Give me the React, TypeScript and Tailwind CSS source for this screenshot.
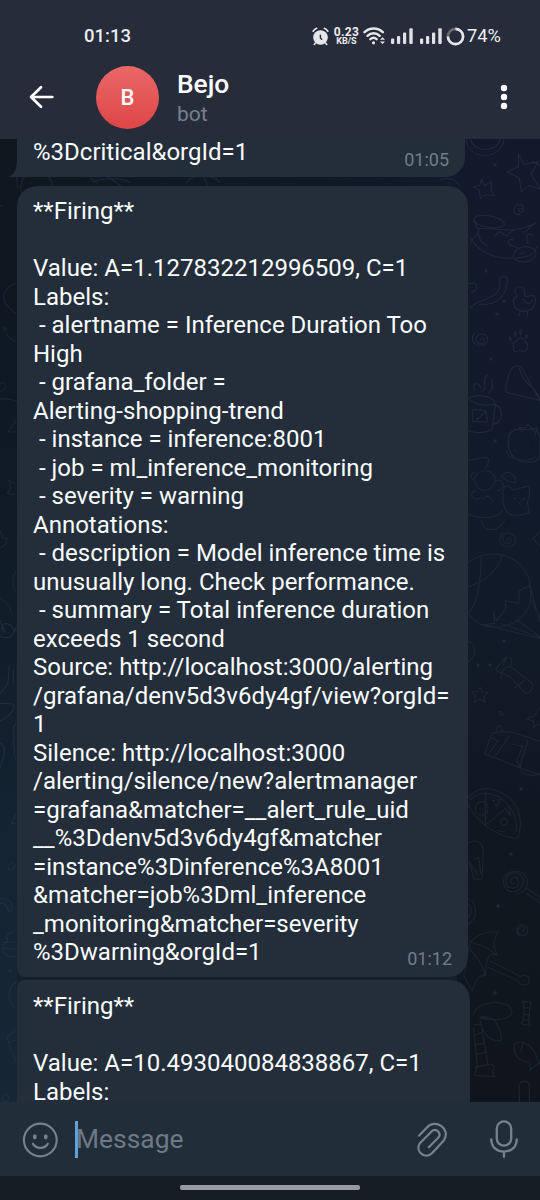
import type { ReactNode } from "react";

const firing: string[] = [
  "**Firing**",
  "",
  "Value: A=1.127832212996509, C=1",
  "Labels:",
  " - alertname = Inference Duration Too",
  "High",
  " - grafana_folder =",
  "Alerting-shopping-trend",
  " - instance = inference:8001",
  " - job = ml_inference_monitoring",
  " - severity = warning",
  "Annotations:",
  " - description = Model inference time is",
  "unusually long. Check performance.",
  " - summary = Total inference duration",
  "exceeds 1 second",
  "Source: http://localhost:3000/alerting",
  "/grafana/denv5d3v6dy4gf/view?orgId=",
  "1",
  "Silence: http://localhost:3000",
  "/alerting/silence/new?alertmanager",
  "=grafana&matcher=__alert_rule_uid",
  "__%3Ddenv5d3v6dy4gf&matcher",
  "=instance%3Dinference%3A8001",
  "&matcher=job%3Dml_inference",
  "_monitoring&matcher=severity",
  "%3Dwarning&orgId=1",
];

const next: string[] = ["**Firing**", "", "Value: A=10.493040084838867, C=1", "Labels:"];

function Lines({ lines }: { lines: string[] }) {
  return (
    <div className="text-[24px] leading-[28.5px] text-[#fafcfd]">
      {lines.map((line, i) => (
        <div key={i} className="h-[28.5px] whitespace-pre">
          {line}
        </div>
      ))}
    </div>
  );
}

function Bubble({ className, children }: { className: string; children: ReactNode }) {
  return <div className={`relative shrink-0 bg-[#232e3a] ${className}`}>{children}</div>;
}

function Wallpaper() {
  return (
    <svg
      className="absolute inset-0 h-full w-full"
      viewBox="0 139 540 963"
      fill="none"
      strokeLinecap="round"
      strokeLinejoin="round"
    >
      <defs>
        <linearGradient id="right" x1="0" y1="0" x2="0" y2="1">
          <stop offset="0" stopColor="#11192b" />
          <stop offset="0.45" stopColor="#111a29" />
          <stop offset="0.75" stopColor="#0f1820" />
          <stop offset="1" stopColor="#10151d" />
        </linearGradient>
        <linearGradient id="left" x1="0" y1="0" x2="0" y2="1">
          <stop offset="0" stopColor="#0f171f" />
          <stop offset="0.4" stopColor="#0f1a25" />
          <stop offset="0.7" stopColor="#142331" />
          <stop offset="1" stopColor="#162635" />
        </linearGradient>
        <linearGradient id="across" x1="0" y1="0" x2="1" y2="0">
          <stop offset="0" stopColor="#0f171f" />
          <stop offset="1" stopColor="#11192b" />
        </linearGradient>
      </defs>
      <rect y="139" width="540" height="963" fill="url(#across)" />
      <rect y="139" width="30" height="963" fill="url(#left)" />
      <rect x="440" y="139" width="100" height="963" fill="url(#right)" />
      <rect x="17" y="972" width="440" height="14" fill="#15202c" />

      <g stroke="#20283b" strokeWidth="3.5" transform="translate(440 130) scale(.33333)">
        <path d="M78 30c8 62 104 62 114 0M92 30c10 36 76 40 88 0M0 150c25-12 50 0 60 18" />
        <path d="m236 72 16 31 43-8-22 37 27 45-33-10-22 18-8-42-36-17 34-16ZM124 147l8 20 23-12-2 23 10 20-27-4-15 12-3-26-18-9 20-6ZM300 106l-24-12" />
        <path d="M246 238c-10-12-14 8-4 8 15 0 11-24-6-22-22 4-20 35 4 29" />
        <path d="M102 268c-2-20 84-14 92 16-20 18-86 8-92-16ZM102 272l10 24c62-4 106 20 175-18l-34 30M90 322c30 52 86 66 140 62 38-4 54-8 60-34M92 338l26-38M114 302c0 30 16 36 28 48M164 318l14-14 22 14 20-18M220 384c0-46 72-42 68-8-12 24-50 26-68 8ZM232 352c-34-2-34-32-12-22M264 342c-12-38 10-32 16-24M242 372l12-6" />
        <path d="M86 462c28-12 32 18 8 26M92 534c14-30 104-22 86-88 12-14 30-4 24 10-6 48-36 70-84 68" />
        <path d="M224 486c0-20 28-22 31 1-5 11 2 16 14 10 28-12 22 46-14 48-42-2-40-42-24-46ZM240 548l-5 10M263 547v11M250 508c12 20 24 12 28 0" />
        <path d="M120 632c8-16 20 2 8 8-16 6-28-14-14-24 22-14 42 12 20 28-28 12-46-16-30-34" />
        <path d="M218 640c16-4 15-22 30-16 0 12 19 12 14 24 2 16-14 20-22 12-12 8-22 6-18-7ZM207 622c5-5 10 8 4 9ZM224 606c7-2 7 13 0 12ZM240 600c8-4 6 16 0 14ZM257 614c8-3 5 12 0 12Z" />
        <path d="M198 770c10-50 20-72 46-58l56 100c-44-14-72-14-102-26ZM238 714c8 46 48 54 60 90" />
        <path d="M82 806c30-18 84-6 84 16l-10 76c-22 14-60 12-76 0ZM164 826c32 2 24 62-8 56M90 808c22 20 58 20 76 14M98 838l40 4 4 34-44-2ZM110 870l26-24M104 780c-10-18 8-28 18-8M126 784c22-10-6-34 16-48M146 788c24-20 4-28 10-40" />
        <path d="M206 920c4-22 30-26 52-20 26-8 42 8 42 24v60c-8 8-24 14-40 12-44 0-60-36-54-76ZM246 906l-8-14 18 2 8-12 10 14 20-2-10 20M224 936h1M246 930h1M264 940h1M226 962h1M248 970h1" />
      </g>

      <g stroke="#1d2634" strokeWidth="3.5" transform="translate(440 450) scale(.33333)">
        <path d="M200 0c-4 30 64 38 88 20M86 30c28 0 26-8 50-8 16 2 10 20 0 30M104 90c2-36 60-38 62 0-4 38-60 44-62 0ZM100 90c-18-20 4-30 12-14M164 96c26-20 36 22 10 26M106 122c-30 12 0 34 20 20M130 150c10-20 24-10 28 8M192 112l12-6 16 14 30-8 18-4v30l-6 20 6 30-22 6-28 2c-30-10-34-50-26-84ZM184 80c18-28 48-4 42 18-22 0-32-10-42-18ZM220 144l6 2M244 150l10-4M236 158l6 5M124 210c4 38 50 40 70 0M80 190c36 18 88 20 108-8" />
        <path d="M200 272c8-16 20 2 8 8-16 6-28-18-14-28 22-14 46 16 24 34-28 18-52-16-30-38M278 266l22-20M278 266l22 20" />
        <path d="M80 340c80-60 200-20 192 100-4 100-150 120-186 50M124 320c-2 72-12 140-36 166M188 314c-20 56-54 80-104 96M160 488l10 24 28-36-2-24 40 8 2-38 20-10 12-4 30 110M160 488l4 32-30 4 166 42M188 522l112 40M228 508l72 52M270 440l30 66" />
        <path d="m168 656 32-36 16 8-4 22 62 48c12 12-4 36-18 32l-44-48-42-20ZM200 620l-10 26M212 650c-22 0-30 20-28 34M252 692l-26 20M120 712l7 14 16 2-11 12 4 16-16-9-17 9 3-19-10-11 17-3ZM260 806l22-8 18-26M260 806l20 8v18l20-12" />
        <path d="m134 910 22-60c48-16 102 10 144 24M136 912c58 22 104 44 164 62M152 862l22 10-28 40M208 858l-42 60M216 882l32 6-18 44 12 20M264 870l-24 78M170 842c-4-18 20-20 16 0M178 786c8-8 18 12 4 10ZM80 572c34 8 30 56 0 64" />
      </g>

      <g stroke="#1b242f" strokeWidth="3.5" transform="translate(440 770) scale(.33333)">
        <path d="M240 0c10 18 42 20 60 10M84 84c44-64 180-10 154 104-4 28-24 14-46 10-44-16-90-54-108-96M90 90c42-50 150 0 138 94M136 66v100l62-52M106 116c0-30 38-26 38 0-2 26-38 26-38 0ZM158 92l24-4-12 20ZM196 116l16 20-8-30M182 152c10-18 30 4 16 12-12 4-18 0-16-12ZM174 182l20 4" />
        <path d="M84 220c24-18 48 0 46 28l-4 78-24 2-14-50M100 268l16-6 6 48M90 280l24 36" />
        <path d="M224 342c-22-2-8-28 6-18 20 22-14 42-30 22-12-36 36-54 50-20 6 44-56 56-60 10 2-40 66-46 72-2 2 28-20 38-36 38M262 356l38 26M258 370l42 28" />
        <path d="M246 484c14 0 8-18-4-14-22 12 2 38 18 20 14-22-22-40-30-14 0 8 2 16 8 20M86 386c26 12 30 60-4 78M82 402c16 10 16 30 0 44" />
        <path d="M90 516c34-32 58-30 84-30-18 34-14 46-2 70-22-10-34 0-36 60-22 0-28 12-40 48l-24-46ZM90 516c44 12 52 16 80 40M90 538c24 24 38 44 44 76M148 572l94 48c18-14 32 8 24 20-14 12-28 2-32-8l-90-40" />
        <path d="M100 736c8-46 108-52 116-12 0 34-84 26-96 18 52-10 64 42 64 70-30 4-56-18-64-60M104 764l20 0 20 120c22-2 22 14 12 20l8 16-60-4 8-30-12-112M104 796l20-8M104 824l28-4M108 854l28-6M106 892l36-8" />
        <path d="m248 694 26 2-4 14-4 46 6 10-28-4 6-10 2-44ZM252 714h16M250 734h18M250 750h16M222 824c16-20 62 0 70 46l8 10M222 824c-2 36 20 50 48 52l0 24 30-24M250 816l-8 30M238 996c4-28-8-44 4-60 14-4 22-2 26 4v56" />
      </g>

      <g stroke="#1b2633" strokeWidth="3.5" transform="translate(0 136) scale(.33333)">
        <path d="M0 210l6-2M54 156c-12-44 10-62 56-42M250 124l12-18M270 126l24 16M48 442c-52 22-48 60 0 90M8 576h12l-6 8ZM20 594c6 14 18 20 28 22M0 744c20-16 24 14 0 24M0 790c20-6 36 0 50 6M48 854l-24 34h22M46 1044l-20-12 6 24-10 16 22 4M0 1184l10 24 12-2-4 18-14 10M48 1306c-14 20-12 50 0 60M0 1388c26 14 34 28 36 50" />
        <circle cx="110" cy="154" r="48" />
        <path d="M280 140c20-16 88-16 110 0M560 140c10-26 80-28 100 0M320 120l48 34M610 120l16 32" />
      </g>
      <g stroke="#1e2e3e" strokeWidth="3.5" transform="translate(0 620) scale(.33333)">
        <path d="M6 36c-6-38 28-30 38 0M0 48c28 14 42-4 48-26M0 0l14 36M28 140l-4 46c-6 18-16 24-24 34M40 148v42M0 250l40 2c8 22-28 48-40 50M48 312c-16 12 0 34-8 60 8 18-2 34 8 48M0 370c28 10 4 56 0 76M48 582l-14 28 14 2M26 748c-8-22 18-30 20-10-8 20-16 10-20 10ZM0 836c46-4 42 42 26 38-4-22-18-26-26-24M8 986c0-26 20-14 14-30-10-18 16-14 14-24M8 986c4 20 26 28 40 24M12 968l36-2M8 984l40 4M48 1086c-28 20-28 60 0 80M20 1250l28-20M20 1250l28 76M28 1266l20-6" />
        <circle cx="16" cy="1434" r="10" />
      </g>

      <g fill="#20293a">
        {[
          [495, 165], [486, 271], [504, 301], [497, 314], [491, 359], [495, 441], [504, 641], [478, 665],
          [490, 665], [521, 789], [511, 854], [498, 906], [495, 993], [10, 971],
        ].map(([x, y], i) => (
          <circle key={i} cx={x} cy={y} r="1.7" />
        ))}
      </g>
    </svg>
  );
}

function SignalBars() {
  return (
    <svg className="h-4 w-[22px]" viewBox="0 0 22 16" fill="#dfe2e6">
      <rect x="0" y="10.5" width="3.2" height="5.5" rx="1" />
      <rect x="6" y="8" width="3.2" height="8" rx="1" />
      <rect x="12" y="4.5" width="3.2" height="11.5" rx="1" />
      <rect x="18.3" y="0.3" width="3.4" height="15.7" rx="1" />
    </svg>
  );
}

function StatusBar() {
  return (
    <div className="flex h-[60px] shrink-0 items-center pt-3 pl-[84px] text-[#eceef1]">
      <div className="w-[228px] text-[18.5px] leading-6 font-medium">01:13</div>
      <svg className="h-[19px] w-[17px]" viewBox="0 0 17 19" fill="none" stroke="#e4e6e9" strokeWidth="1.6" strokeLinecap="round">
        <circle cx="8.5" cy="10.5" r="7.3" fill="#e4e6e9" stroke="none" />
        <path d="M1.1 4.2C2.2 2.5 3.2 1.7 4.7 1.2M15.9 4.2c-1.1-1.7-2.1-2.5-3.6-3M3.4 16.1l-1.1 1.3M13.6 16.1l1.1 1.3" />
        <path d="M8.4 8.2v2.7l1.3 1.3" stroke="#272c3a" strokeWidth="1.4" />
      </svg>
      <div className="ml-[5px] flex w-[25px] flex-col items-center font-bold">
        <span className="h-[10px] text-[12px] leading-[10px] tracking-[0.3px]">0.23</span>
        <span className="h-[9px] text-[9px] leading-[9px]">KB/S</span>
      </div>
      <svg className="ml-[4px] h-[18px] w-[23px]" viewBox="0 0 23 18" fill="none" stroke="#e4e6e9" strokeWidth="2.4" strokeLinecap="round">
        <path d="M1.5 5.2c5.3-5 13.1-5 18.3 0M4.5 8.8c3.5-3.4 8.8-3.4 12.2 0M7.4 12.2c1.9-1.7 4.4-1.7 6.2 0" />
        <circle cx="10.5" cy="15.8" r="1.6" fill="#e4e6e9" stroke="none" />
        <path d="m17 12.8 2.5-2.6 2.5 2.6ZM17 14.5l2.5 2.6 2.5-2.6Z" fill="#e4e6e9" stroke="none" />
      </svg>
      <div className="ml-[5px] flex gap-[7px]">
        <SignalBars />
        <SignalBars />
      </div>
      <svg className="ml-[4px] h-[19px] w-[19px]" viewBox="0 0 19 19" fill="none" strokeWidth="2.6">
        <circle cx="9.5" cy="9.5" r="7.6" stroke="#686d78" />
        <path d="M9.5 1.9a7.6 7.6 0 1 1-7.6 7.6" stroke="#e4e6e9" />
      </svg>
      <div className="ml-[2px] text-[18.3px] leading-6">74%</div>
    </div>
  );
}

function ChatHeader() {
  return (
    <div className="flex h-[79px] shrink-0 items-start pl-[28px]">
      <svg className="mt-[25px] h-6 w-[27px]" viewBox="0 0 27 24" fill="none" stroke="#ffffff" strokeWidth="2.7" strokeLinecap="round" strokeLinejoin="round">
        <path d="M24.3 12H3M13 2.2 3 12l10 9.8" />
      </svg>
      <div className="mt-[6px] ml-[41px] flex h-[63px] w-[63px] items-center justify-center rounded-full bg-linear-to-b from-[#ea6768] to-[#de4546] text-[22px] font-medium text-white">
        B
      </div>
      <div className="ml-[18px] w-[316px]">
        <div className="mt-[9px] text-[26.3px] leading-[30px] font-medium text-white">Bejo</div>
        <div className="pt-px text-[21px] leading-[28px] text-[#76808d]">bot</div>
      </div>
      <svg className="mt-[24px] ml-[7px] h-[26px] w-2" viewBox="0 0 8 26" fill="#ffffff">
        <circle cx="4" cy="4" r="3.2" />
        <circle cx="4" cy="13" r="3.2" />
        <circle cx="4" cy="22" r="3.2" />
      </svg>
    </div>
  );
}

function Composer() {
  return (
    <div className="flex h-[74px] shrink-0 items-center bg-[#222d3a] pl-[22px]">
      <svg className="mt-[2px] h-9 w-9" viewBox="0 0 36 36" fill="none" stroke="#77828e" strokeWidth="2.1" strokeLinecap="round">
        <circle cx="18.3" cy="18" r="16.4" />
        <path d="M11 21.8c3.4 5.3 11.4 5.3 14.8 0" strokeWidth="2.3" />
        <ellipse cx="12.8" cy="14.8" rx="1.9" ry="2.6" fill="#77828e" stroke="none" />
        <ellipse cx="23.8" cy="14.8" rx="1.9" ry="2.6" fill="#77828e" stroke="none" />
      </svg>
      <div className="ml-[17px] h-[37px] w-[3px] bg-[#5da3df]" />
      <div className="-ml-[2px] w-[341px] text-[26.4px] leading-9 text-[#6e7985]">Message</div>
      <svg className="mt-[2px] h-9 w-[31px]" viewBox="0 0 31 36" fill="none" stroke="#77828e" strokeWidth="2.2" strokeLinecap="round" strokeLinejoin="round">
        <path d="M2.2 13.6 10.2 5.2C18.5-3.4 34.4 6.3 26.8 18.5L15.2 31C8.7 37.8-2.6 30 2.9 21.2L14.6 9.4c4.4-4 10.4 1.6 6.6 6.3L11.8 25.2" />
      </svg>
      <svg className="ml-[42px] h-[38px] w-7" viewBox="0 0 28 38" fill="none" stroke="#77828e" strokeWidth="2.3" strokeLinecap="round">
        <rect x="6.8" y="1.4" width="14.4" height="24.3" rx="7.2" />
        <path d="M1.3 19.4c0 16.3 25.4 16.3 25.4 0M14 31.8v5" />
      </svg>
    </div>
  );
}

export default function App() {
  return (
    <div className="flex h-[1200px] w-[540px] flex-col overflow-hidden bg-[#272c3a] font-['Roboto','Noto_Sans',sans-serif]">
      <StatusBar />
      <ChatHeader />
      <main className="relative flex h-[963px] shrink-0 flex-col overflow-hidden">
        <Wallpaper />
        <Bubble className="ml-[16.5px] h-[38px] w-[448.5px] rounded-br-[20px] pl-[16.5px]">
          <svg className="absolute bottom-0 -left-[9px] h-5 w-[10px]" viewBox="0 0 10 20" fill="#232e3a">
            <path d="M10 0v20H0c6-2.5 9-7 9-20Z" />
          </svg>
          <div className="-mt-[1px]">
            <Lines lines={["%3Dcritical&orgId=1"]} />
          </div>
          <span className="absolute right-4 bottom-[7px] text-[18px] leading-5 text-[#717c89]">01:05</span>
        </Bubble>
        <Bubble className="mt-[9px] ml-[16.5px] h-[791px] w-[451.5px] rounded-[20px] rounded-bl-[8px] pt-[11px] pl-[16.5px]">
          <Lines lines={firing} />
          <span className="absolute right-4 bottom-[8px] text-[18px] leading-5 text-[#717c89]">01:12</span>
        </Bubble>
        <Bubble className="mt-[3px] ml-[16.5px] h-[140px] w-[453.5px] rounded-tl-[8px] rounded-tr-[20px] pt-[12px] pl-[16.5px]">
          <Lines lines={next} />
        </Bubble>
      </main>
      <Composer />
      <div className="flex h-6 shrink-0 justify-center bg-[#171d25] pt-[9px]">
        <div className="h-[5px] w-[180px] rounded-[2px] bg-[#979ba1]" />
      </div>
    </div>
  );
}
